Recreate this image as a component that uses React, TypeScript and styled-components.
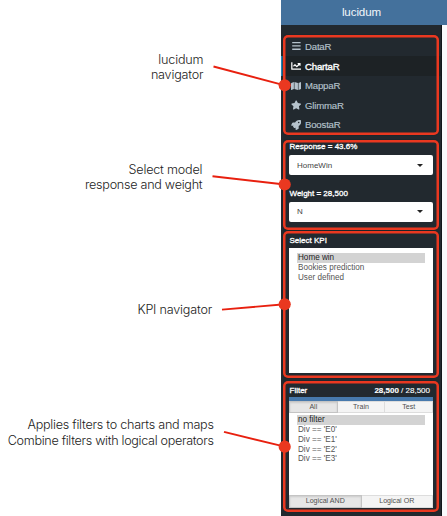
import React from "react";
import styled, { createGlobalStyle } from "styled-components";
import { FaChartLine, FaMap, FaRocket, FaStar } from "react-icons/fa";

const Global = createGlobalStyle`
  * { box-sizing: border-box; }
  body { margin: 0; background: #fff; font-family: "Liberation Sans", Arial, sans-serif; overflow: hidden; }
`;

const RED = "#ea3820";

const Page = styled.main`
  position: relative;
  display: grid;
  grid-template-columns: 281px 161px 5px;
  width: 447px;
  height: 516px;
  overflow: hidden;
`;

const Notes = styled.div`
  display: flex;
  flex-direction: column;
`;

const Note = styled.div<{ $gap: number; $right: number }>`
  margin-top: ${(p) => p.$gap}px;
  width: ${(p) => p.$right}px;
  text-align: right;
  white-space: nowrap;
  font: 300 12.6px/15.6px Inter, "Liberation Sans", sans-serif;
  color: #1c1c1c;
`;

const NoteLine = styled.div<{ $tracking?: number }>`
  letter-spacing: ${(p) => p.$tracking ?? -0.2}px;
`;

const Sidebar = styled.aside`
  display: flex;
  flex-direction: column;
  height: 516px;
  background: #22292f;
  border-right: 1px solid #10161a;
  color: #fff;
`;

const Brand = styled.header`
  height: 25px;
  flex: none;
  margin: 0 -1px 9.7px 0;
  background: #44719c;
  color: #f2f6fa;
  text-align: center;
  font-size: 11.6px;
  line-height: 23px;
  letter-spacing: -0.1px;
`;

const Section = styled.section<{ $height: number; $gap: number }>`
  position: relative;
  flex: none;
  height: ${(p) => p.$height}px;
  margin-bottom: ${(p) => p.$gap}px;
  padding: 0 8px;

  &::after {
    content: "";
    position: absolute;
    inset: 0 2px 0 2.4px;
    border-radius: 5px;
    box-shadow: inset 0 0 0 2.5px ${RED}, 0 0 1px #10161a;
    pointer-events: none;
  }
`;

const NavList = styled.nav`
  display: flex;
  flex-direction: column;
  margin: 0 -8px;
  padding-top: 2px;
`;

const NavItem = styled.a<{ $active?: boolean }>`
  display: flex;
  align-items: center;
  gap: 4px;
  height: 19.6px;
  padding-left: 9.6px;
  box-shadow: ${(p) => (p.$active ? "inset 1.6px 0 #2480b3" : "none")};
  background: ${(p) => (p.$active ? "#1d2225" : "transparent")};
  color: ${(p) => (p.$active ? "#fff" : "#b5c2cc")};
  font-size: 9.6px;
  letter-spacing: -0.18px;
  -webkit-text-stroke: ${(p) => (p.$active ? 0.35 : 0.15)}px currentColor;

  svg { width: 10.4px; height: 10px; flex: none; stroke-width: 0; }
`;

const Caption = styled.div<{ $height: number; $bottom?: number }>`
  display: flex;
  justify-content: space-between;
  align-items: flex-end;
  height: ${(p) => p.$height}px;
  padding: 0 3px ${(p) => p.$bottom ?? 4}px 0.5px;
  font-size: 8px;
  line-height: 9px;
  -webkit-text-stroke: 0.3px #fff;

  b { font-weight: 700; }
  span { -webkit-text-stroke: 0.1px #fff; }
`;

const Select = styled.button`
  display: flex;
  align-items: center;
  justify-content: space-between;
  width: 144px;
  height: 19.6px;
  padding: 0 10px 0 8px;
  border: 0;
  border-radius: 2px;
  background: #fff;
  color: #444;
  font: 8px "Liberation Sans", Arial, sans-serif;

  &::after {
    content: "";
    border: 3px solid transparent;
    border-top-color: #222;
    border-bottom: 0;
  }
`;

const Panel = styled.div<{ $height: number; $top: number }>`
  width: 144px;
  height: ${(p) => p.$height}px;
  padding: ${(p) => p.$top}px 8px 0;
  background: #fff;
`;

const Option = styled.div<{ $selected?: boolean }>`
  height: 9.8px;
  padding-left: 1px;
  line-height: 9.8px;
  font-size: 8.15px;
  color: ${(p) => (p.$selected ? "#222" : "#555")};
  background: ${(p) => (p.$selected ? "#d3d3d3" : "transparent")};
`;

const Accent = styled.div`
  width: 144px;
  height: 4px;
  background: #4779ac;
`;

const ButtonGroup = styled.div<{ $height: number }>`
  display: flex;
  width: 144px;
  height: ${(p) => p.$height}px;
  background: #f4f4f4;
`;

const GroupButton = styled.button<{ $active?: boolean }>`
  flex: 1;
  padding: 0;
  border: 1px solid ${(p) => (p.$active ? "#c4c4c4" : "#ddd")};
  border-left-width: ${(p) => (p.$active ? 1 : 0)}px;
  background: ${(p) => (p.$active ? "#e6e6e6" : "#f4f4f4")};
  box-shadow: ${(p) => (p.$active ? "inset 0 1px 2px rgba(0,0,0,.12)" : "none")};
  color: #505050;
  font: 7.1px "Liberation Sans", Arial, sans-serif;
`;

const Margin = styled.div`
  background: linear-gradient(#44719c 25px, #f9fafc 25px);
`;

const Pointers = styled.svg`
  position: absolute;
  inset: 0;
  pointer-events: none;
`;

const BarsIcon = () => (
  <svg viewBox="0 0 10 10" fill="currentColor">
    <path d="M1 1h8.4v1.3H1zM1 4.3h8.4v1.3H1zM1 7.6h8.4v1.3H1z" />
  </svg>
);

const pages = [
  { name: "DataR", Icon: BarsIcon },
  { name: "ChartaR", Icon: FaChartLine, active: true },
  { name: "MappaR", Icon: FaMap },
  { name: "GlimmaR", Icon: FaStar },
  { name: "BoostaR", Icon: FaRocket },
];

const pointers = [
  [213.5, 66.5, 85.3],
  [212.5, 176.2, 184.5],
  [222, 309.6, 304.3],
  [224, 431.8, 446.7],
];

export default function App() {
  return (
    <Page>
      <Global />
      <Notes>
        <Note $gap={51.5} $right={203.3}>
          <NoteLine>lucidum</NoteLine>
          <NoteLine>navigator</NoteLine>
        </Note>
        <Note $gap={79} $right={202.3}>
          <NoteLine>Select model</NoteLine>
          <NoteLine $tracking={-0.27}>response and weight</NoteLine>
        </Note>
        <Note $gap={109.5} $right={212}>
          <NoteLine>KPI navigator</NoteLine>
        </Note>
        <Note $gap={99} $right={213.7}>
          <NoteLine $tracking={-0.25}>Applies filters to charts and maps</NoteLine>
          <NoteLine $tracking={-0.31}>Combine filters with logical operators</NoteLine>
        </Note>
      </Notes>

      <Sidebar>
        <Brand>lucidum</Brand>
        <Section $height={100.8} $gap={4.2}>
          <NavList>
            {pages.map(({ name, Icon, active }) => (
              <NavItem key={name} $active={active}><Icon />{name}</NavItem>
            ))}
          </NavList>
        </Section>
        <Section $height={90} $gap={1.5}>
          <Caption $height={15.6}>Response = 43.6%</Caption>
          <Select>HomeWin</Select>
          <Caption $height={27.2}>Weight = 28,500</Caption>
          <Select>N</Select>
        </Section>
        <Section $height={146.6} $gap={3.5}>
          <Caption $height={17} $bottom={3.4}>Select KPI</Caption>
          <Panel $height={125.3} $top={4.8}>
            <Option $selected>Home win</Option>
            <Option>Bookies prediction</Option>
            <Option>User defined</Option>
          </Panel>
        </Section>
        <Section $height={131} $gap={0}>
          <Caption $height={15.5} $bottom={1.8}>Filter<span><b>28,500</b> / 28,500</span></Caption>
          <Accent />
          <ButtonGroup $height={12}>
            <GroupButton $active>All</GroupButton>
            <GroupButton>Train</GroupButton>
            <GroupButton>Test</GroupButton>
          </ButtonGroup>
          <Panel $height={82.2} $top={2.4}>
            <Option $selected>no filter</Option>
            {["E0", "E1", "E2", "E3"].map((d) => (
              <Option key={d}>{`Div == '${d}'`}</Option>
            ))}
          </Panel>
          <ButtonGroup $height={13}>
            <GroupButton $active>Logical AND</GroupButton>
            <GroupButton>Logical OR</GroupButton>
          </ButtonGroup>
        </Section>
      </Sidebar>
      <Margin />

      <Pointers width="447" height="516">
        {pointers.map(([x, y, end]) => (
          <g key={y}>
            <line x1={x} y1={y} x2={284.7} y2={end} stroke="#e8200f" strokeWidth="1.9" />
            <circle cx={284.7} cy={end} r="6.1" fill={RED} />
          </g>
        ))}
      </Pointers>
    </Page>
  );
}
